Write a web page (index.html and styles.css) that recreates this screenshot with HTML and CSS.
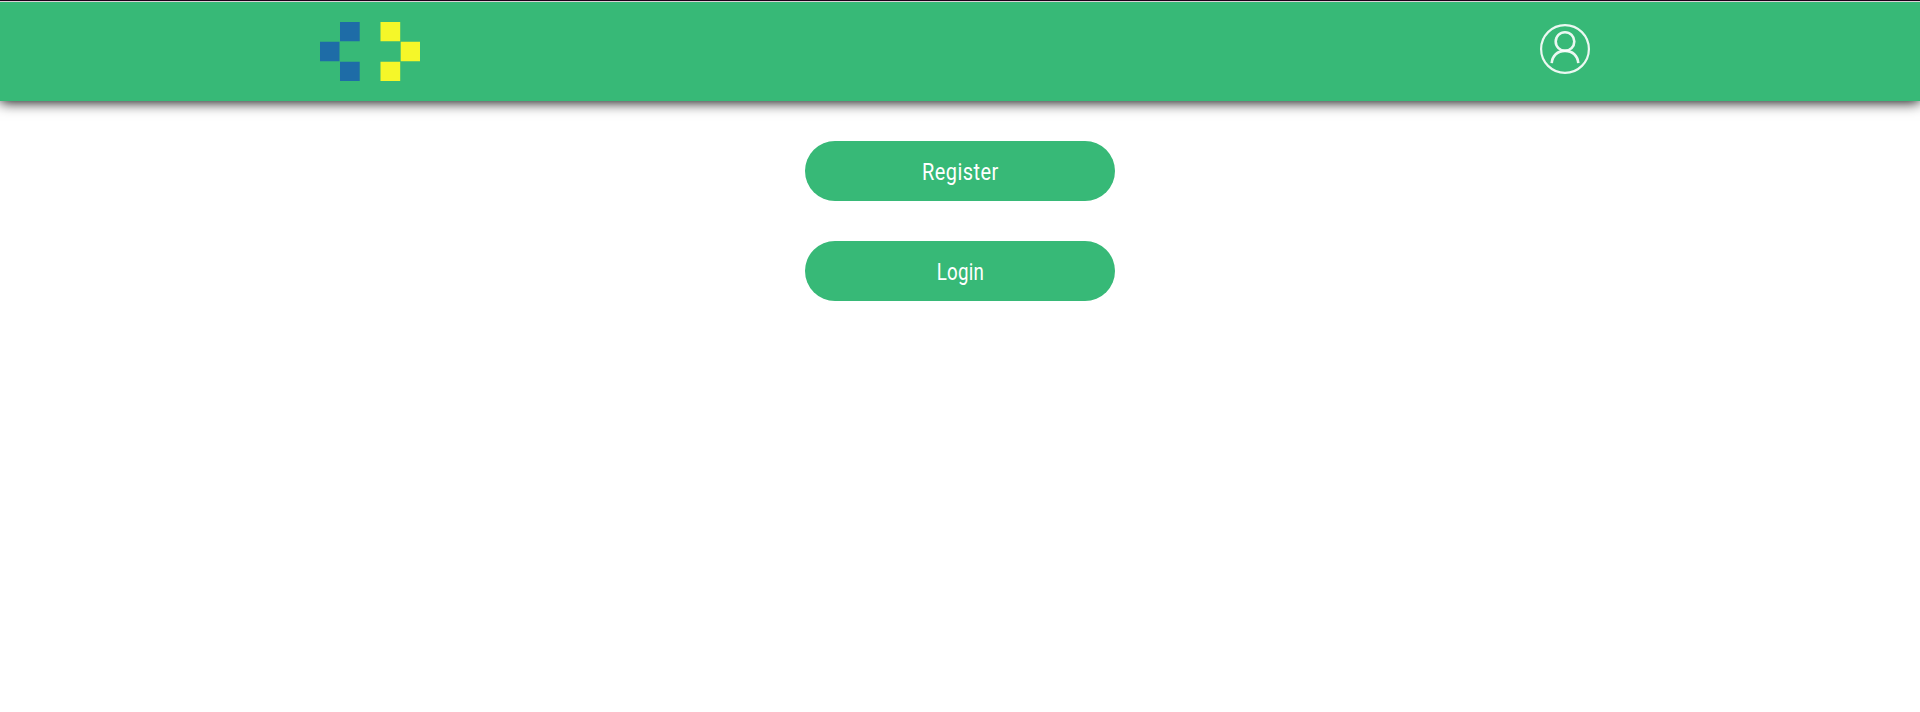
FILE: index.html
```html
<!DOCTYPE html>
<html lang="en">
<head>
<meta charset="utf-8">
<title>Account</title>
<link rel="stylesheet" href="styles.css">
</head>
<body>
<div class="top-edge"></div>
<header class="header">
  <a class="logo" aria-label="Home">
    <svg width="100" height="59" viewBox="0 0 100 59">
      <path fill="#1e6ca7" d="M20 0h19.700v19.200H20zM0 19.700h19.500v19.600H0zM20 39.700h19.700V59H20z"/>
      <path fill="#f5f729" d="M60.500 0h19.700v19.200H60.500zM80.700 19.700H100v19.600H80.700zM60.500 39.700h19.700V59H60.500z"/>
    </svg>
  </a>
  <a class="account" aria-label="Account">
    <svg width="50" height="50" viewBox="0 0 50 50" fill="none" stroke="#fff" stroke-opacity=".9">
      <circle cx="25" cy="25" r="23.900" stroke-width="2.200"/>
      <circle cx="25" cy="17.500" r="9.300" stroke-width="2.600"/>
      <path stroke-width="2.600" d="M11.700 39.200C12.300 31.800 17.400 26.900 25 26.900s12.700 4.900 13.300 12.300"/>
    </svg>
  </a>
</header>
<main class="actions">
  <button class="button"><span class="label label-register">Register</span></button>
  <button class="button"><span class="label label-login">Login</span></button>
</main>
</body>
</html>
```
FILE: styles.css
```css
body {
  margin: 0;
  background: #fff;
  font-family: Roboto, "Liberation Sans", sans-serif;
}
.top-edge {
  position: relative;
  z-index: 1;
  box-sizing: border-box;
  height: 2px;
  background: #1c0018;
  border-bottom: 1px solid #dccfd7;
}
.header {
  box-sizing: border-box;
  height: 99px;
  padding: 20px 330px 0 320px;
  display: flex;
  justify-content: space-between;
  background: #37b977;
  box-shadow: 0 1px 13px #000;
}
.logo svg,
.account svg {
  display: block;
}
.account {
  padding-top: 2px;
}
.actions {
  display: flex;
  flex-direction: column;
  align-items: center;
  gap: 40px;
  padding-top: 40px;
}
.button {
  width: 310px;
  height: 60px;
  padding: 2px 0 0;
  border: 0;
  border-radius: 30px;
  background: #37b977;
  color: #fff;
  font-family: inherit;
  font-size: 24px;
  font-weight: 400;
}
.label {
  display: inline-block;
}
.label-register {
  letter-spacing: .6px;
  transform: scaleX(.83);
}
.label-login {
  letter-spacing: .3px;
  transform: scaleX(.78);
}
```
